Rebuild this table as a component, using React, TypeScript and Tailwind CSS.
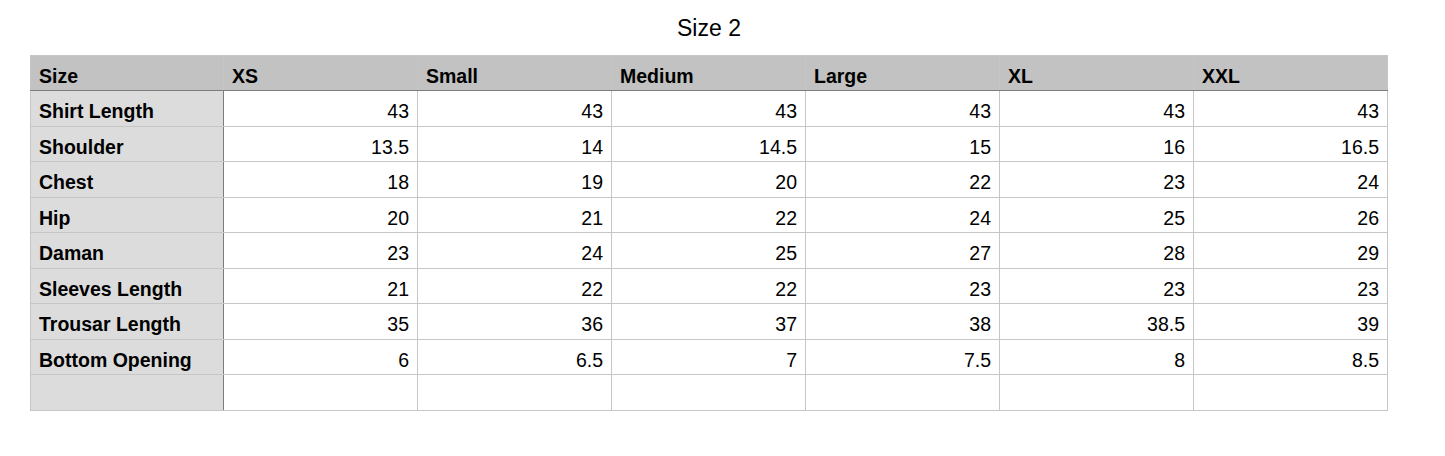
const COLS = ["XS", "Small", "Medium", "Large", "XL", "XXL"];

const ROWS: { label: string; values: string[] }[] = [
  { label: "Shirt Length", values: ["43", "43", "43", "43", "43", "43"] },
  { label: "Shoulder", values: ["13.5", "14", "14.5", "15", "16", "16.5"] },
  { label: "Chest", values: ["18", "19", "20", "22", "23", "24"] },
  { label: "Hip", values: ["20", "21", "22", "24", "25", "26"] },
  { label: "Daman", values: ["23", "24", "25", "27", "28", "29"] },
  { label: "Sleeves Length", values: ["21", "22", "22", "23", "23", "23"] },
  { label: "Trousar Length", values: ["35", "36", "37", "38", "38.5", "39"] },
  { label: "Bottom Opening", values: ["6", "6.5", "7", "7.5", "8", "8.5"] },
  { label: "", values: ["", "", "", "", "", ""] },
];

export default function App() {
  return (
    <div className="h-[456px] w-[1445px] bg-white pl-[30px] pt-[12px] text-black [font-family:'Liberation_Sans',Arial,sans-serif]">
      <div className="w-[1358px] text-center text-[23px] leading-[32px]">Size 2</div>
      <table className="mt-[11px] w-[1358px] table-fixed border-collapse text-[19.5px] leading-[22px]">
        <thead>
          <tr className="h-[35px] bg-[#c1c2c1]">
            <th className="w-[193px] border border-[#c6c6c6] border-b-[#7c7c7c] pb-0 pl-[8px] pt-[6px] text-left font-bold">
              Size
            </th>
            {COLS.map((c) => (
              <th
                key={c}
                className="border border-[#c6c6c6] border-b-[#7c7c7c] pb-0 pl-[8px] pt-[6px] text-left font-bold"
              >
                {c}
              </th>
            ))}
          </tr>
        </thead>
        <tbody>
          {ROWS.map((r, i) => (
            <tr key={i} className="h-[35.5px]">
              <td className="border border-[#c6c6c6] border-r-[#7c7c7c] bg-[#dcdcdc] pb-0 pl-[8px] pt-[6px] font-bold">
                {r.label}
              </td>
              {r.values.map((v, j) => (
                <td key={j} className="border border-[#c6c6c6] pb-0 pr-[8px] pt-[6px] text-right">
                  {v}
                </td>
              ))}
            </tr>
          ))}
        </tbody>
      </table>
    </div>
  );
}
